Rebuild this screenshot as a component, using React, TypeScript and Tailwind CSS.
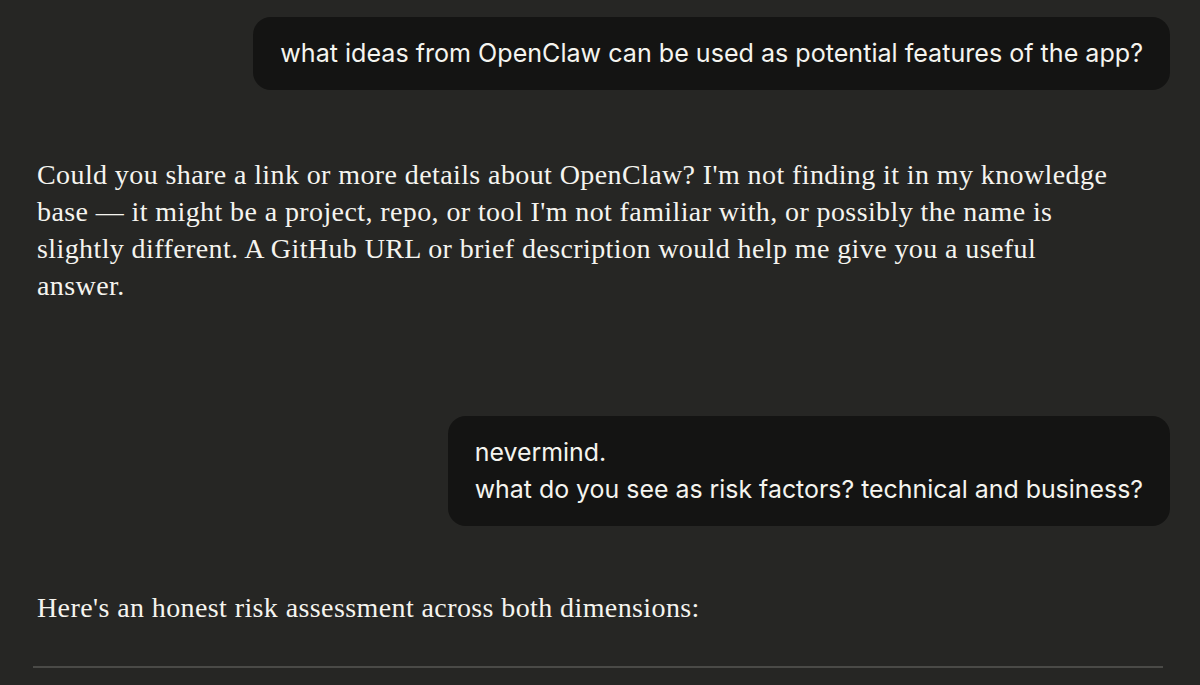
import React from "react";

export default function App() {
  const serif = { fontFamily: '"Liberation Serif", "DejaVu Serif", serif' };
  return (
    <div className="w-[1200px] h-[685px] overflow-hidden bg-[#262624] text-[#f5f4ef]">
      <div className="flex flex-col px-[33px] pt-[17px]">
        <div className="flex justify-end">
          <div className="bg-[#141413] rounded-[18px] px-[27px] py-[20px] mr-[-3px] text-[25.1px] leading-[33px] font-['Inter',sans-serif]">
            what ideas from OpenClaw can be used as potential features of the app?
          </div>
        </div>
        <div className="mt-[66px] pl-[4px] text-[28px] leading-[37px] tracking-[0.4px]" style={serif}>
          Could you share a link or more details about OpenClaw? I'm not finding it in my knowledge
          <br />
          base — it might be a project, repo, or tool I'm not familiar with, or possibly the name is
          <br />
          slightly different. A GitHub URL or brief description would help me give you a useful
          <br />
          answer.
        </div>
        <div className="flex justify-end mt-[112px]">
          <div className="bg-[#141413] rounded-[18px] px-[27px] py-[18px] mr-[-3px] text-[24.9px] leading-[37px] font-['Inter',sans-serif]">
            nevermind.
            <br />
            what do you see as risk factors? technical and business?
          </div>
        </div>
        <div className="mt-[63px] pl-[4px] text-[28px] leading-[37px] tracking-[0.4px]" style={serif}>
          Here's an honest risk assessment across both dimensions:
        </div>
        <div className="mt-[40px] h-[2px] bg-[#4a4a47] w-[1130px]" />
      </div>
    </div>
  );
}
